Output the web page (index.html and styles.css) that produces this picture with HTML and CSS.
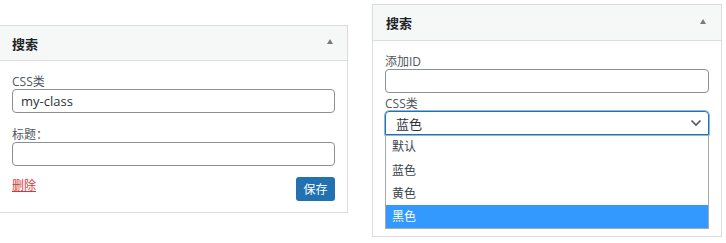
FILE: index.html
```html
<!DOCTYPE html>
<html>
<head>
    <title>Widgets</title>
    <link rel="stylesheet" href="styles.css">
</head>
<body>
    <div class="page">
        <div class="widget widget-left">
            <div class="widget-head">
                <span class="widget-title">搜索</span>
                <span class="toggle"></span>
            </div>
            <div class="widget-body">
                <label class="field-label">CSS类</label>
                <div class="input">my-class</div>
                <label class="field-label spaced">标题：</label>
                <div class="input"></div>
                <div class="actions">
                    <a class="delete">删除</a>
                    <button class="save">保存</button>
                </div>
            </div>
        </div>

        <div class="widget widget-right">
            <div class="widget-head">
                <span class="widget-title">搜索</span>
                <span class="toggle"></span>
            </div>
            <div class="widget-body">
                <label class="field-label">添加ID</label>
                <div class="input"></div>
                <label class="field-label tight">CSS类</label>
                <div class="select">
                    <span>蓝色</span>
                    <svg class="chevron" width="12" height="8" viewBox="0 0 12 8">
                        <path d="M1.5 1.5 L6 6 L10.5 1.5" fill="none" stroke="#50575e" stroke-width="1.6"/>
                    </svg>
                </div>
                <ul class="options">
                    <li>默认</li>
                    <li>蓝色</li>
                    <li>黄色</li>
                    <li class="active">黑色</li>
                </ul>
            </div>
        </div>
    </div>
</body>
</html>
```

FILE: styles.css
```css
body {
    margin: 0;
    background: #fff;
    color: #3c434a;
    font-family: "Open Sans", "Noto Sans CJK SC", sans-serif;
    font-size: 12px;
}

.page {
    display: flex;
    align-items: flex-start;
}

.widget {
    border: 1px solid #dcdcde;
    background: #fff;
    box-sizing: border-box;
}

.widget-left {
    width: 349px;
    margin-top: 25px;
    margin-left: -1px;
}

.widget-right {
    width: 350px;
    margin-top: 4px;
    margin-left: 24px;
}

.widget-head {
    display: flex;
    align-items: center;
    justify-content: space-between;
    height: 34px;
    padding: 0 14px 0 12px;
    background: #f6f7f7;
    border-bottom: 1px solid #dcdcde;
}

.widget-right .widget-head {
    height: 35px;
    padding-left: 13px;
    padding-right: 15px;
}

.widget-title {
    font-size: 13px;
    font-weight: 600;
    color: #1d2327;
}

.toggle {
    width: 0;
    height: 0;
    border-left: 3.5px solid transparent;
    border-right: 3.5px solid transparent;
    border-bottom: 5px solid #787c82;
    margin-top: -3px;
}

.widget-body {
    padding: 14px 12px 11px 12px;
}

.widget-right .widget-body {
    padding: 14px 12px 7px 12px;
}

.field-label {
    display: block;
    line-height: 14px;
    color: #50575e;
}

.field-label.spaced {
    margin-top: 15px;
}

.field-label.tight {
    margin-top: 4px;
}

.input {
    height: 24px;
    box-sizing: border-box;
    border: 1px solid #8c8f94;
    border-radius: 4px;
    padding: 0 8px;
    line-height: 22px;
    font-size: 13px;
    color: #2c3338;
}

.actions {
    display: flex;
    justify-content: space-between;
    align-items: center;
    margin-top: 11px;
}

.delete {
    color: #d63638;
    text-decoration: underline;
    font-size: 12px;
    margin-top: -8px;
}

.save {
    background: #2271b1;
    color: #fff;
    border: none;
    border-radius: 3px;
    height: 24px;
    width: 39px;
    padding: 0;
    font-family: inherit;
    font-size: 12px;
}

.select {
    display: flex;
    align-items: center;
    justify-content: space-between;
    height: 24px;
    box-sizing: border-box;
    border: 1px solid #2271b1;
    border-radius: 4px 4px 0 0;
    box-shadow: 0 0 0 0.5px #2271b1;
    padding: 0 6px 0 10px;
    font-size: 13px;
    color: #2c3338;
}

.options {
    list-style: none;
    margin: 0;
    padding: 0;
    border: 1px solid #a7aaad;
    border-top: none;
}

.options li {
    height: 23px;
    line-height: 24px;
    padding-left: 6px;
    font-size: 12px;
    color: #3c434a;
}

.options li:first-child {
    height: 24px;
}

.options li.active {
    background: #3399ff;
    color: #fff;
}
```
